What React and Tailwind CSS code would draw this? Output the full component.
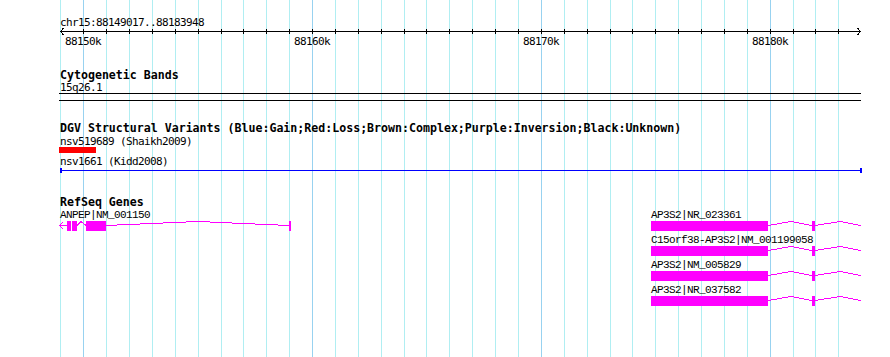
import React from "react";

const FONT = "DejaVu Sans Mono, monospace";
const FONT_U = "Liberation Mono, monospace";
const gridXs = Array.from({ length: 35 }, (_, k) => ({
  x: Math.round(60.4 + 22.88 * k),
  major: k === 1 || k === 11 || k === 21 || k === 31,
}));
const majors = [
  { x: 83, label: "88150k" },
  { x: 312, label: "88160k" },
  { x: 541, label: "88170k" },
  { x: 770, label: "88180k" },
];

const transcripts = [
  "AP3S2|NR_023361",
  "C15orf38-AP3S2|NM_001199058",
  "AP3S2|NM_005829",
  "AP3S2|NR_037582",
];

function Grid() {
  return (
    <svg className="absolute inset-0" width="890" height="357" shapeRendering="crispEdges">
      {gridXs.map((g) => (
        <rect key={g.x} x={g.x} y="0" width="1" height="357" fill={g.major ? "#98d2f0" : "#b0eef2"} />
      ))}
    </svg>
  );
}

function Label({ x, y, anchor = "start", font = FONT, spacing = "-0.62", children }) {
  return (
    <text x={x} y={y} textAnchor={anchor} fontFamily={font} fontSize="11" letterSpacing={spacing} fill="#000">
      {children}
    </text>
  );
}

function Ruler() {
  return (
    <svg width="890" height="22" className="block" shapeRendering="crispEdges">
      <rect x="60" y="3" width="801" height="1" fill="#000" />
      {gridXs.slice(1).map((g) => (
        <rect key={g.x} x={g.x} y="1" width="1" height="5" fill="#000" />
      ))}
      <polyline points="63.5,0 60.5,3.5 63.5,7" fill="none" stroke="#000" strokeWidth="1" />
      <polyline points="857.5,0 860.5,3.5 857.5,7" fill="none" stroke="#000" strokeWidth="1" />
      {majors.map((m) => (
        <Label key={m.x} x={m.x} y="17" anchor="middle">
          {m.label}
        </Label>
      ))}
    </svg>
  );
}

function GeneTrack() {
  return (
    <svg width="890" height="100" className="block">
      <g shapeRendering="crispEdges" fill="#ff00ff" stroke="none">
        <rect x="67" y="12" width="4" height="10" />
        <rect x="72" y="12" width="5" height="10" />
        <rect x="86" y="12" width="20" height="10" />
        <rect x="289" y="12" width="2" height="10" />
        {transcripts.map((t, i) => (
          <g key={t}>
            <rect x="651" y={12 + 25 * i} width="117" height="10" />
            <rect x="812" y={12 + 25 * i} width="3" height="10" />
          </g>
        ))}
      </g>
      <g fill="none" stroke="#ff00ff" strokeWidth="1" shapeRendering="crispEdges">
        <polyline points="63,13 59.5,16.5 63,20" />
        <polyline points="59.5,16.5 67,16.5" />
        <polyline points="77,16.5 81,12.5 86,16.5" />
        <polyline points="106,16.5 198,12.5 289,16.5" />
        {transcripts.map((t, i) => {
          const y = 25 * i;
          return (
            <g key={t}>
              <polyline points={`768,${y + 16.5} 791,${y + 12.5} 812,${y + 16.5}`} />
              <polyline points={`815,${y + 16.5} 840,${y + 12.5} 861,${y + 16.5}`} />
            </g>
          );
        })}
      </g>
      <Label x="60" y="9" font={FONT_U} spacing="-0.6">ANPEP|NM_001150</Label>
      {transcripts.map((t, i) => (
        <Label key={t} x="651" y={9 + 25 * i} font={FONT_U} spacing="-0.6">
          {t}
        </Label>
      ))}
    </svg>
  );
}

export default function App() {
  const reg =
    "font-['DejaVu_Sans_Mono',monospace] text-[11px] tracking-[-0.62px] leading-[13px] text-black whitespace-pre";
  const bold =
    "font-['DejaVu_Sans_Mono',monospace] text-[11.6px] font-bold leading-[14px] text-black whitespace-pre";
  return (
    <div className="relative w-[890px] h-[357px] bg-white overflow-hidden">
      <Grid />
      <div className="relative flex flex-col pt-[16px]">
        <div className={`${reg} h-[12px] pl-[60px]`}>chr15:88149017..88183948</div>
        <Ruler />

        <div className={`${bold} mt-[18px] h-[13px] pl-[60px]`}>Cytogenetic Bands</div>
        <div className={`${reg} h-[12px] pl-[60px]`}>15q26.1</div>
        <svg width="890" height="8" className="block" shapeRendering="crispEdges">
          <rect x="59" y="0" width="802" height="1" fill="#000" />
          <rect x="59" y="7" width="802" height="1" fill="#000" />
        </svg>

        <div className={`${bold} mt-[20px] h-[14px] pl-[60px]`}>
          DGV Structural Variants (Blue:Gain;Red:Loss;Brown:Complex;Purple:Inversion;Black:Unknown)
        </div>
        <div className={`${reg} h-[12px] pl-[60px]`}>nsv519689 (Shaikh2009)</div>
        <div className="ml-[59px] w-[37px] h-[6px] bg-[#ff0000]" />
        <div className={`${reg} mt-[2px] h-[12px] pl-[60px]`}>nsv1661 (Kidd2008)</div>
        <svg width="890" height="7" className="block" shapeRendering="crispEdges">
          <rect x="60" y="3" width="802" height="1" fill="#0000ff" />
          <rect x="60" y="1" width="2" height="5" fill="#0000ff" />
          <rect x="860" y="1" width="2" height="5" fill="#0000ff" />
        </svg>

        <div className={`${bold} mt-[21px] h-[14px] pl-[60px]`}>RefSeq Genes</div>
        <GeneTrack />
      </div>
    </div>
  );
}
